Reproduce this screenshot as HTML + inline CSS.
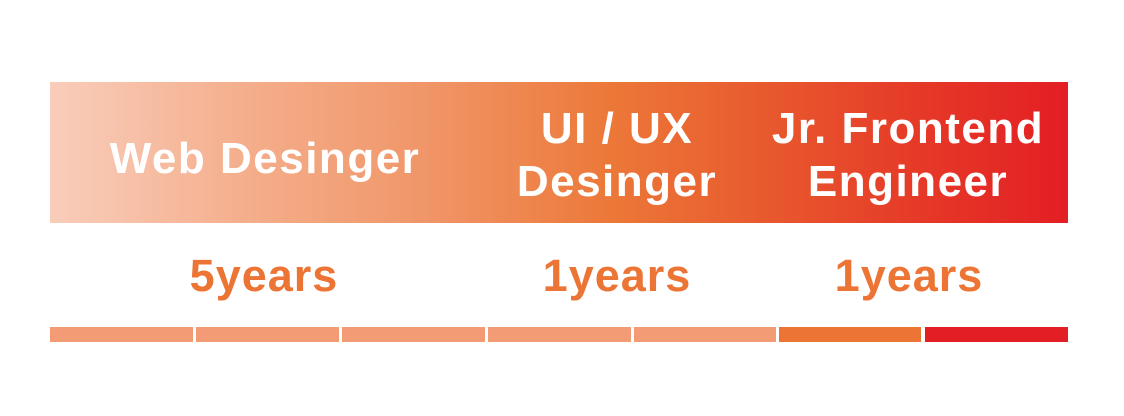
<!DOCTYPE html>
<html><head><style>
body{margin:0;width:1124px;height:416px;background:#fff;position:relative;overflow:hidden;font-family:"Liberation Sans",sans-serif;font-weight:bold}
.ban{position:absolute;left:50px;top:82px;width:1018px;height:141px;background:linear-gradient(90deg,#f9cdbb 0%,#f4ad8a 20%,#f09466 38%,#ec7838 55%,#e85a2e 70%,#e63a28 85%,#e31e24 100%)}
.t{position:absolute;color:#fff;font-size:44px;text-align:center;width:400px;line-height:53px;letter-spacing:1.5px}
.y{position:absolute;color:#ec7434;font-size:45px;text-align:center;width:300px;top:250px;letter-spacing:1px}
.b{position:absolute;top:327px;height:15px}
</style></head><body>
<div class="ban"></div>
<div class="t" style="left:65px;top:132px">Web Desinger</div>
<div class="t" style="left:417px;top:102px">UI / UX<br>Desinger</div>
<div class="t" style="left:708px;top:102px">Jr. Frontend<br>Engineer</div>
<div class="y" style="left:114px">5years</div>
<div class="y" style="left:467px">1years</div>
<div class="y" style="left:759px">1years</div>
<div class="b" style="left:50px;width:143px;background:#f39b74"></div>
<div class="b" style="left:196px;width:143px;background:#f39b74"></div>
<div class="b" style="left:342px;width:143px;background:#f39b74"></div>
<div class="b" style="left:488px;width:143px;background:#f39b74"></div>
<div class="b" style="left:634px;width:142px;background:#f39b74"></div>
<div class="b" style="left:779px;width:142px;background:#ec7434"></div>
<div class="b" style="left:925px;width:143px;background:#e31e24"></div>
</body></html>
